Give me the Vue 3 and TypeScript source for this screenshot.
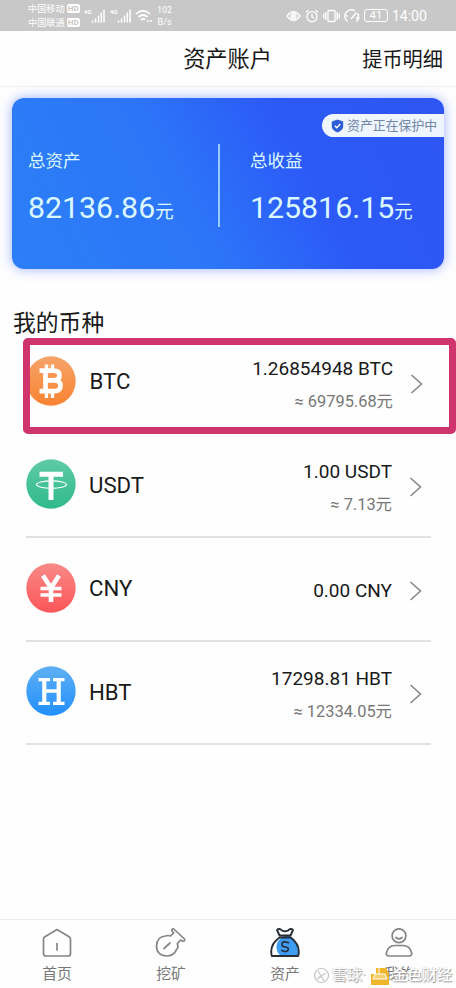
<script setup lang="ts">
interface Coin {
  name: string
  amount: string
  value?: string
  from: string
  to: string
  marked?: boolean
}

const coins: Coin[] = [
  { name: 'BTC', amount: '1.26854948 BTC', value: '69795.68', from: '#f6a469', to: '#f98331', marked: true },
  { name: 'USDT', amount: '1.00 USDT', value: '7.13', from: '#5fcba5', to: '#2fba8b' },
  { name: 'CNY', amount: '0.00 CNY', from: '#f98a87', to: '#fb5558' },
  { name: 'HBT', amount: '17298.81 HBT', value: '12334.05', from: '#5fb0f4', to: '#218ffb' },
]
const carriers: string[] = ['中国移动', '中国联通']
</script>

<template>
  <div class="screen">
    <div class="status">
      <div class="carriers">
        <div v-for="c in carriers" :key="c" class="carrier">{{ c }}<b>HD</b></div>
      </div>
      <div v-for="n in 2" :key="n" class="signal">
        <span>4G</span>
        <svg width="14" height="14" viewBox="0 0 14 14">
          <path d="M1.5 13.5v-2M4.5 13.5v-4M7.5 13.5v-7M10.3 13.5V3.500M13 13.500V0.500" stroke="#fff" stroke-width="1.5" />
        </svg>
      </div>
      <svg class="wifi" width="18" height="14" viewBox="0 0 18 14" fill="none" stroke="#fff" stroke-width="1.700">
        <path d="M1 5Q8 -1.500 15 5M3.500 8Q8 4 12.500 8M5.800 10.700Q8 9 10.200 10.700" />
        <path d="M12 12h5" stroke-width="1.500" stroke-dasharray="2 1" />
      </svg>
      <div class="rate"><span>102</span><span>B/s</span></div>
      <div class="tray">
        <svg width="15" height="14" viewBox="0 0 15 14" fill="none" stroke="#fff" stroke-width="1.300">
          <path d="M1 7Q7.500 -1.500 14 7Q7.500 15.500 1 7Z" /><circle cx="7.500" cy="7" r="2.600" /><circle cx="7.500" cy="7" r="1" fill="#fff" />
        </svg>
        <svg width="14" height="14" viewBox="0 0 14 14" fill="none" stroke="#fff" stroke-width="1.300">
          <circle cx="7" cy="7.700" r="5" /><path d="M7 5v3l2.200 1M1 3.500 3.500 1M13 3.500 10.500 1" />
        </svg>
        <svg width="17" height="14" viewBox="0 0 17 14" fill="none" stroke="#fff" stroke-width="1.300">
          <rect x="5" y="1.500" width="7" height="11" rx="1" /><path d="M2.800 3v8M14.200 3v8M.8 4.500v5M16.200 4.500v5" />
        </svg>
        <svg width="16" height="14" viewBox="0 0 16 14" fill="none" stroke="#fff" stroke-width="1.400">
          <path d="M3.500 12.500A6.300 6.300 0 0 1 11 2M13.500 4.500a6.300 6.300 0 0 1-1 8M7 10l5.500-6.500M1.800 7h2M11.800 9h2.500" />
        </svg>
        <div class="battery">41</div>
      </div>
      <div class="clock">14:00</div>
    </div>

    <header class="header">
      <h1>资产账户</h1>
      <span class="detail">提币明细</span>
    </header>

    <section class="card">
      <div class="badge">
        <svg width="13" height="14" viewBox="0 0 13 14">
          <path d="M6.500.5 12.200 2.500v5q0 3.500-5.700 6Q.8 11 .8 7.500v-5Z" fill="#2f5fd6" />
          <path d="m3.800 6.700 2 2L9.300 5" fill="none" stroke="#fff" stroke-width="1.300" />
        </svg>
        <span>资产正在保护中</span>
      </div>
      <div class="total">
        <div class="caption">总资产</div>
        <div class="sum">82136.86<small>元</small></div>
      </div>
      <div class="split"></div>
      <div class="total">
        <div class="caption">总收益</div>
        <div class="sum">125816.15<small>元</small></div>
      </div>
    </section>

    <h2>我的币种</h2>

    <div class="list">
      <div v-for="coin in coins" :key="coin.name" class="row" :class="{ marked: coin.marked }">
        <svg class="coin" width="50" height="50" viewBox="0 0 50 50">
          <defs>
            <linearGradient :id="'g' + coin.name" x1="0" y1="0" x2="0" y2="1">
              <stop offset="0" :stop-color="coin.from" /><stop offset="1" :stop-color="coin.to" />
            </linearGradient>
          </defs>
          <circle cx="25" cy="25" r="24.700" :fill="`url(#g${coin.name})`" />
          <g v-if="coin.name === 'BTC'" fill="none" stroke="#fff">
            <path d="M13.500 14.700h14q6 0 6 4.800t-6 4.800h-7M20 24.500h8.500q6 0 6 5.300T28.500 35.200H13.500M19.500 14v21.500" stroke-width="4.700" />
            <path d="M20.500 8.500v6M26.500 8.500v6M20.500 35v7M26.500 35v7" stroke-width="3.400" />
          </g>
          <g v-else-if="coin.name === 'USDT'" fill="none" stroke="#fff">
            <path d="M13.500 15.200h23.500M25 15v26" stroke-width="5" />
            <ellipse cx="25.500" cy="25.600" rx="15" ry="3.700" stroke-width="1.200" />
          </g>
          <g v-else-if="coin.name === 'CNY'" fill="none" stroke="#fff">
            <path d="M17 12.500 25 25l8-12.500M25 24v15" stroke-width="4.600" />
            <path d="M14.500 25.500h21M14.500 32h21" stroke-width="3.300" />
          </g>
          <g v-else fill="none" stroke="#fff">
            <path d="M18.300 13.500v24M32.700 13.500v24" stroke-width="4.200" />
            <path d="M12.500 13.700h11.500M27 13.700H38.500M12.500 37.300h11.500M27 37.300H38.500M18 25h15" stroke-width="3.300" />
          </g>
        </svg>
        <span class="name">{{ coin.name }}</span>
        <div class="figures">
          <div class="amount">{{ coin.amount }}</div>
          <div v-if="coin.value" class="value">≈ {{ coin.value }}元</div>
        </div>
        <svg class="arrow" width="14" height="22" viewBox="0 0 14 22">
          <path d="M1.500 2 11.500 11 1.500 20" fill="none" stroke="#858585" stroke-width="1.500" />
        </svg>
      </div>
    </div>

    <nav class="tabs">
      <div class="tab">
        <svg width="30" height="32" viewBox="0 0 30 32" fill="none" stroke="#858585" stroke-width="1.700" stroke-linejoin="round" stroke-linecap="round">
          <path d="M15 1.500 27.500 9q1 .7 1 2v14.500q0 2.500-2.500 2.500H4q-2.500 0-2.500-2.500V11q0-1.300 1-2Z" /><path d="M15 15.500v6.500" />
        </svg>
        <span>首页</span>
      </div>
      <div class="tab">
        <svg width="32" height="32" viewBox="0 0 32 32" fill="none" stroke="#858585" stroke-width="1.700" stroke-linejoin="round" stroke-linecap="round">
          <path d="m15.500 8 3.200-3.200L17 3q-.8-2.300 1.800-2L29.500 11q.8 2.500-1.800 2.200l-2.200-1.200-3.300 4q1.500 2.500.2 4.500-1.400 1-1.900 3Q17.500 28 12 28 1.500 27.500 1.500 18 2 8.500 10.500 8q2.500-1 5 0Z" />
          <path d="m9 20.500 6-5.500" />
        </svg>
        <span>挖矿</span>
      </div>
      <div class="tab">
        <svg width="30" height="32" viewBox="0 0 30 32" fill="none" stroke="#292d35" stroke-width="1.900" stroke-linejoin="round" stroke-linecap="round">
          <g transform="translate(0 -1)">
            <path d="M19 8q10 6 9 21H11q-5-4-4.500-10T14 9Z" fill="#3e9df2" stroke="none" />
            <path d="M9.500 8.500 7 3q2-2.300 5 .5 3 1.500 6 0 3-2.800 5-.5L20.500 8.500Z" fill="#fff" />
            <path d="M9.500 10.500Q-1 18 1.800 29h26.400Q31 18 20.500 10.500Z" />
            <path d="M18.500 15.700q-6-2-6.500 1t3.500 3.300 2.300 3.700q-2 1.800-6-.2" stroke-width="1.700" />
          </g>
        </svg>
        <span>资产</span>
      </div>
      <div class="tab">
        <svg width="30" height="32" viewBox="0 0 30 32" fill="none" stroke="#858585" stroke-width="1.700" stroke-linejoin="round" stroke-linecap="round">
          <path d="M12 9.500q3 2.700 6 0M5 28q-3 0-2.700-3Q4 17.500 11 17.500h8q7 0 8.700 7.500.3 3-2.700 3Z" /><circle cx="15" cy="7.700" r="6.900" />
        </svg>
        <span>我的</span>
      </div>
      <div class="watermark">
        <svg width="17" height="17" viewBox="0 0 17 17" fill="none" stroke="#c4c4c4" stroke-width="1.200">
          <circle cx="8.500" cy="8.500" r="7" fill="#fff" /><path d="m5 4 3 5 5-3M4 12l4-3 3 5" />
        </svg>
        <span class="source">雪球·</span>
        <svg class="gold" width="18" height="19" viewBox="0 0 18 19">
          <path d="M0 8h5V2h10l3 6v11H0Z" fill="#efb52b" /><path d="M4 8h10l2 5H2ZM8 2v6" fill="#f6d06d" stroke="#fff" />
        </svg>
        <span class="brand">金色财经</span>
      </div>
    </nav>
  </div>
</template>

<style>
body { margin: 0; background: #fff; }
</style>

<style scoped>
.screen { width: 456px; height: 988px; display: flex; flex-direction: column; overflow: hidden; background: #fefefe; color: #191919; font-family: Roboto, "Noto Sans CJK SC", sans-serif; }
svg { display: block; flex: none; }
.status { box-sizing: border-box; flex: none; height: 31px; padding: 0 28px; display: flex; align-items: center; background: #c8c8c8; color: #fff; }
.carriers { width: 56px; }
.carrier { display: flex; align-items: center; gap: 2px; font-size: 9.200px; line-height: 13.500px; white-space: nowrap; }
.carrier b { font-size: 8px; line-height: 9px; padding: 0 1px; background: #fff; color: #c8c8c8; border-radius: 2px; }
.signal { display: flex; align-items: center; width: 26px; }
.signal span { font-size: 6px; font-weight: 700; width: 7px; margin-top: -8px; }
.wifi { margin-left: -1px; }
.rate { display: flex; flex-direction: column; align-items: center; margin-left: 4px; font-size: 9px; line-height: 12px; }
.tray { display: flex; align-items: center; gap: 4px; margin-left: auto; }
.battery { box-sizing: border-box; width: 24px; height: 13px; border: 1px solid #fff; border-radius: 3px; font-size: 11px; line-height: 11px; text-align: center; }
.clock { width: 36px; margin-left: 4px; font-size: 14.200px; letter-spacing: -0.1px; }
.header { box-sizing: border-box; flex: none; height: 56px; display: grid; grid-template-columns: 1fr auto 1fr; align-items: center; padding: 1px 13px 0 12px; border-bottom: 1px solid #f1f1f3; }
h1 { grid-column: 2; margin: 0; font-size: 22.200px; font-weight: 400; line-height: 30px; }
.detail { justify-self: end; margin-top: 1px; font-size: 20.200px; line-height: 30px; }
.card { position: relative; box-sizing: border-box; flex: none; height: 171px; margin: 11px 12px 0; padding: 46px 0 0 16px; display: flex; border-radius: 12px; background: linear-gradient(62deg, #2c7ff6 0%, #2c75f8 40%, #2c5af7 66%, #2d55f2 100%); box-shadow: 0 0 12px rgba(60, 100, 255, 0.5); color: #dcf8ff; }
.badge { position: absolute; right: 0; top: 16px; box-sizing: border-box; width: 122px; height: 23px; padding-left: 9px; display: flex; align-items: center; gap: 3px; background: #eef5ff; border-radius: 12px 0 0 12px; color: #7387a4; font-size: 12.900px; line-height: 23px; white-space: nowrap; }
.total { width: 190px; }
.caption { margin-top: 4px; font-size: 17.500px; line-height: 26px; }
.sum { margin-top: 14px; font-size: 30.300px; line-height: 40px; white-space: nowrap; }
.sum small { font-size: 18.500px; }
.split { width: 2px; height: 83px; margin-right: 30px; background: #95cbff; }
h2 { flex: none; margin: 38px 0 0 13px; height: 31px; font-size: 22.800px; font-weight: 400; line-height: 33px; }
.list { flex: none; padding: 0 25px 0 26px; }
.row { box-sizing: border-box; height: 103.500px; display: flex; align-items: center; border-bottom: 2px solid #e1e1e1; }
.row.marked { height: 96px; margin: 0 -25px 0.5px -3px; padding-right: 17px; border: 7px solid #d0346c; border-radius: 5px; overflow: hidden; }
.marked .coin { margin-left: -4px; margin-top: -10px; }
.marked .name { margin-top: -10px; }
.marked .figures { margin-top: -1px; }
.marked .arrow { margin-top: -4px; }
.coin { margin-top: -2px; margin-left: -0.5px; }
.name { margin: -1px 0 0 13.500px; font-size: 22.200px; line-height: 30px; }
.figures { margin: 7px 0 0 auto; text-align: right; white-space: nowrap; }
.amount { font-size: 19px; line-height: 32.500px; }
.row:not(.marked) .amount:only-child { margin-top: -2px; }
.value { color: #777; font-size: 16.400px; line-height: 32.500px; }
.arrow { margin: 4px 8px 0 17px; }
.tabs { position: relative; box-sizing: border-box; flex: none; height: 69px; margin-top: auto; padding-top: 8px; display: grid; grid-template-columns: repeat(4, 1fr); border-top: 1px solid #ebebeb; }
.tab { display: flex; flex-direction: column; align-items: center; color: #777; font-size: 14.800px; line-height: 22px; gap: 3px; }
.watermark { position: absolute; left: 313px; top: 44px; height: 22px; display: flex; align-items: center; color: #fff; font-size: 15px; line-height: 20px; white-space: nowrap; text-shadow: 1px 1px 1px #999, -1px 0 1px #ccc; }
.source { margin-left: 2px; width: 39px; }
.brand { margin-left: 3px; font-size: 15px; font-weight: 500; }
</style>
